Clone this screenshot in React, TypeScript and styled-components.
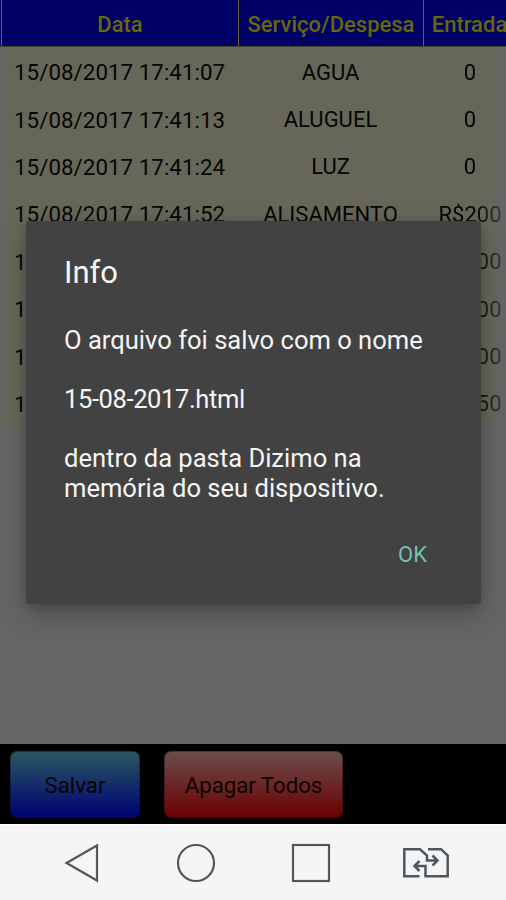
import React from 'react';
import styled, { createGlobalStyle } from 'styled-components';

const GlobalStyle = createGlobalStyle`
  * { box-sizing: border-box; }
  body {
    margin: 0;
    font-family: Roboto, 'Liberation Sans', sans-serif;
    background: #656565;
  }
`;

const Screen = styled.div`
  position: relative;
  width: 506px;
  height: 900px;
  overflow: hidden;
  display: flex;
  flex-direction: column;
  background: #656565;
`;

const TableArea = styled.main`
  flex: 1;
  min-height: 0;
  overflow: hidden;
`;

const columns = '237px 185px 92px';

const HeaderRow = styled.div`
  display: grid;
  grid-template-columns: ${columns};
  box-sizing: content-box;
  width: 514px;
  height: 46px;
  padding-left: 1px;
  background: #000066;
  border-bottom: 1px solid #45452f;
`;

const HeaderCell = styled.div`
  display: flex;
  align-items: center;
  justify-content: center;
  padding-top: 3px;
  border-left: 1px solid #67633a;
  color: #67670c;
  font-size: 22px;
  font-weight: 500;
  white-space: nowrap;
`;

const Rows = styled.div`
  width: 506px;
  height: 380px;
  overflow: hidden;
  background: linear-gradient(90deg, #656565 0, #666659 7px, #666659 488px, #656565 505px);
`;

const Row = styled.div`
  display: grid;
  grid-template-columns: ${columns};
  box-sizing: content-box;
  width: 514px;
  height: 47.4px;
  padding-left: 1px;
`;

const Cell = styled.div`
  display: flex;
  align-items: center;
  justify-content: center;
  padding-top: 3px;
  color: #060604;
  font-size: 22px;
  white-space: nowrap;
`;

const DateCell = styled(Cell)`
  justify-content: flex-start;
  padding-left: 13px;
  font-size: 22.3px;
  letter-spacing: 0.05px;
`;

const AmountCell = styled(Cell)`
  padding-left: 2px;
  mask-image: linear-gradient(90deg, #000 52px, rgba(0, 0, 0, 0.35) 84px);
`;

const Scrim = styled.div`
  position: absolute;
  inset: 0 0 76px;
  display: flex;
  justify-content: center;
  align-items: flex-start;
  padding: 221px 25px 0 26px;
  overflow: hidden;
`;

const Dialog = styled.section`
  display: flex;
  flex-direction: column;
  width: 455px;
  height: 383px;
  padding: 34px 38px 0;
  border-radius: 3px;
  background: #424242;
  box-shadow: 0 10px 26px rgba(0, 0, 0, 0.24), 0 2px 8px rgba(0, 0, 0, 0.16);
`;

const Title = styled.h2`
  margin: 0 0 36px;
  color: #f8f8f8;
  font-size: 31px;
  font-weight: 400;
  line-height: 35px;
`;

const Message = styled.div`
  display: flex;
  flex-direction: column;
  gap: 29.5px;
  color: #f5f5f5;
  font-size: 25.55px;
  line-height: 29.5px;
`;

const Paragraph = styled.p<{ $tight?: boolean }>`
  margin: 0;
  white-space: pre;
  letter-spacing: ${({ $tight }) => ($tight ? '-0.4px' : '0')};
`;

const Actions = styled.div`
  display: flex;
  justify-content: flex-end;
  margin-top: 39px;
  padding-right: 16px;
`;

const TextButton = styled.button`
  padding: 0;
  border: 0;
  background: none;
  color: #79bfb2;
  font: 400 22px/26px Roboto, sans-serif;
`;

const Toolbar = styled.footer`
  display: flex;
  gap: 24px;
  height: 80px;
  padding: 7px 10px;
  background: #000;
`;

const ActionButton = styled.button<{ $width: number; $from: string; $to: string }>`
  width: ${({ $width }) => $width}px;
  height: 67px;
  padding: 0;
  border: 1px solid rgba(30, 10, 30, 0.45);
  border-radius: 7px;
  background: linear-gradient(${({ $from, $to }) => `${$from}, ${$to}`});
  background-origin: border-box;
  color: #080404;
  font: 400 22.2px Roboto, sans-serif;
  white-space: nowrap;
`;

const NavBar = styled.nav`
  height: 76px;
  background: #f5f5f5;
  border-top: 1px solid #fff;
`;

const NavIcons = styled.svg`
  display: block;
  fill: none;
  stroke: #4e5860;
  stroke-width: 2.2;
`;

const entries = [
  ['15/08/2017 17:41:07', 'AGUA', '0'],
  ['15/08/2017 17:41:13', 'ALUGUEL', '0'],
  ['15/08/2017 17:41:24', 'LUZ', '0'],
  ['15/08/2017 17:41:52', 'ALISAMENTO', 'R$200'],
  ['15/08/2017', '', 'R$200'],
  ['15/08/2017', '', 'R$200'],
  ['15/08/2017', '', 'R$200'],
  ['15/08/2017', '', 'R$150'],
];

export default function App() {
  return (
    <>
      <GlobalStyle />
      <Screen>
        <TableArea>
          <HeaderRow>
            <HeaderCell>Data</HeaderCell>
            <HeaderCell>Serviço/Despesa</HeaderCell>
            <HeaderCell>Entrada</HeaderCell>
          </HeaderRow>
          <Rows>
            {entries.map(([date, service, amount], index) => (
              <Row key={index}>
                <DateCell>{date}</DateCell>
                <Cell>{service}</Cell>
                <AmountCell>{amount}</AmountCell>
              </Row>
            ))}
          </Rows>
        </TableArea>
        <Toolbar>
          <ActionButton $width={130} $from="#29595f" $to="#000074">Salvar</ActionButton>
          <ActionButton $width={179} $from="#6b4d4d" $to="#6c0000">Apagar Todos</ActionButton>
        </Toolbar>
        <NavBar>
          <NavIcons width="506" height="75" viewBox="0 825 506 75">
            <path d="M97 845.5V880.5L66.5 863Z" />
            <circle cx="196" cy="863" r="18" />
            <rect x="293" y="845" width="36" height="36" />
            <path
              strokeWidth="2.5"
              d="M419.5 876.2H404.3V849.2H420L427 855.5V860.5H437M432.5 855.5L437.5 860.5L432.5 865.5M428 849.2H441L447.7 855.5V876.2H425.5V866H415M419.5 861L414.5 866L419.5 871"
            />
          </NavIcons>
        </NavBar>
        <Scrim>
          <Dialog role="dialog">
            <Title>Info</Title>
            <Message>
              <Paragraph>O arquivo foi salvo com o nome</Paragraph>
              <Paragraph $tight>15-08-2017.html</Paragraph>
              <Paragraph>{'dentro da pasta Dizimo na\nmemória do seu dispositivo.'}</Paragraph>
            </Message>
            <Actions>
              <TextButton>OK</TextButton>
            </Actions>
          </Dialog>
        </Scrim>
      </Screen>
    </>
  );
}
